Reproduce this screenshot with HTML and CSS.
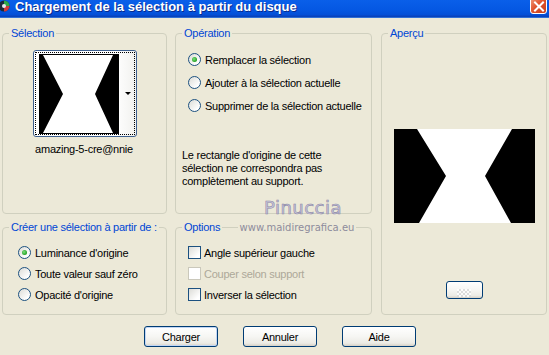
FILE: index.html
```html
<!DOCTYPE html>
<html>
  <head>
    <meta charset="utf-8">
    <title>Chargement de la sélection à partir du disque</title>
    <link rel="stylesheet" href="styles.css">
  </head>
  <body>
    <div class="titlebar">
      <svg class="app-icon" width="12" height="13" viewBox="0 0 12 13">
        <circle cx="5" cy="6" r="5.5" fill="#1a2a3a"/>
        <path d="M5 6 L5 0.5 A5.5 5.5 0 0 1 10.5 6 Z" fill="#2fa84a"/>
        <path d="M5 6 L10.5 6 A5.5 5.5 0 0 1 5 11.5 Z" fill="#d23a3a"/>
        <circle cx="5" cy="6" r="2" fill="#e8e8f0"/>
      </svg>
      <span class="title">Chargement de la sélection à partir du disque</span>
      <span class="close">
        <svg width="12" height="11" viewBox="0 0 12 11">
          <path d="M2 1.5 L10 9.5 M10 1.5 L2 9.5" stroke="#fff" stroke-width="2" stroke-linecap="square"/>
        </svg>
      </span>
    </div>

    <div class="dialog">
      <div class="groups">
        <fieldset class="group group-selection">
          <legend>Sélection</legend>
          <div class="thumb-combo">
            <div class="thumb-focus">
              <svg class="thumb" width="80" height="80" viewBox="0 0 80 80">
                <rect x="0" y="0" width="80" height="80" fill="#000"/>
                <polygon points="4,1 74,1 56,40 74,79 4,79 24,40" fill="#fff"/>
              </svg>
              <span class="arrow"></span>
            </div>
          </div>
          <div class="thumb-name">amazing-5-cre@nnie</div>
        </fieldset>

        <fieldset class="group group-operation">
          <legend>Opération</legend>
          <div class="option-list op-list">
            <label class="option"><span class="radio checked"></span>Remplacer la sélection</label>
            <label class="option"><span class="radio"></span>Ajouter à la sélection actuelle</label>
            <label class="option"><span class="radio"></span>Supprimer de la sélection actuelle</label>
          </div>
          <p class="note">Le rectangle d'origine de cette<br>sélection ne correspondra pas<br>complètement au support.</p>
        </fieldset>

        <fieldset class="group group-preview">
          <legend>Aperçu</legend>
          <svg class="preview" width="141" height="94" viewBox="0 0 141 94">
            <rect x="0" y="0" width="141" height="94" fill="#000"/>
            <polygon points="23,0 118,0 91,47 117,94 25,94 52,47" fill="#fff"/>
          </svg>
          <button class="btn mini-btn" type="button">
            <span class="checker"></span>
          </button>
        </fieldset>

        <fieldset class="group group-create">
          <legend>Créer une sélection à partir de :</legend>
          <div class="option-list small-list">
            <label class="option"><span class="radio checked"></span>Luminance d'origine</label>
            <label class="option"><span class="radio"></span>Toute valeur sauf zéro</label>
            <label class="option"><span class="radio"></span>Opacité d'origine</label>
          </div>
        </fieldset>

        <fieldset class="group group-options">
          <legend>Options</legend>
          <div class="option-list small-list check-list">
            <label class="option"><span class="check"></span>Angle supérieur gauche</label>
            <label class="option disabled"><span class="check"></span>Couper selon support</label>
            <label class="option"><span class="check"></span>Inverser la sélection</label>
          </div>
        </fieldset>

        <div class="watermark">
          <div class="wm-name">Pinuccia</div>
          <div class="wm-url">www.maidiregrafica.eu</div>
        </div>
      </div>

      <div class="buttons">
        <button class="btn default" type="button">Charger</button>
        <button class="btn" type="button">Annuler</button>
        <button class="btn" type="button">Aide</button>
      </div>
    </div>
  </body>
</html>
```

FILE: styles.css
```css
body {
  margin: 0;
  width: 549px;
  height: 355px;
  overflow: hidden;
  background: #ece9d8;
  font-family: "Liberation Sans", Arial, sans-serif;
  font-size: 11px;
  letter-spacing: -0.25px;
  color: #000;
}

/* barre de titre XP */
.titlebar {
  height: 17px;
  display: flex;
  align-items: flex-start;
  background: linear-gradient(#0a5fe9, #0558e3 55%, #0450d8 85%, #0a3fb5);
  border-bottom: 1px solid #2f6fd6;
  position: relative;
}

.app-icon {
  margin: 0 0 0 -1px;
}

.title {
  margin-left: 4px;
  color: #fff;
  font-weight: bold;
  font-size: 13px;
  line-height: 14px;
  letter-spacing: 0;
  text-shadow: 1px 1px 0 #0a2a8a;
  white-space: nowrap;
}

.close {
  position: absolute;
  right: 2px;
  top: -3px;
  width: 17px;
  height: 17px;
  box-sizing: border-box;
  border: 1px solid #fff;
  border-radius: 3px;
  background: linear-gradient(135deg, #f09b7c, #e0552e 45%, #c7401d);
  display: flex;
  align-items: center;
  justify-content: center;
  padding-top: 2px;
}

.dialog {
  padding: 8px 0 0 2px;
}

.groups {
  display: grid;
  grid-template-columns: 165px 197px 167px;
  grid-template-rows: 188px 95px;
  column-gap: 8px;
  row-gap: 6px;
  position: relative;
}

.group {
  margin: 0;
  padding: 0;
  min-width: 0;
  border: 1px solid #d0d0bf;
  border-radius: 4px;
  box-sizing: border-box;
}

.group legend {
  margin-left: 6px;
  padding: 0 2px;
  color: #0046d5;
  line-height: 14px;
  white-space: nowrap;
}

.group-selection {
  grid-column: 1;
  grid-row: 1;
  display: flex;
  flex-direction: column;
  align-items: center;
}

.group-operation {
  grid-column: 2;
  grid-row: 1;
}

.group-preview {
  grid-column: 3;
  grid-row: 1 / span 2;
  margin-left: 1px;
  display: flex;
  flex-direction: column;
  align-items: center;
}

.group-create {
  grid-column: 1;
  grid-row: 2;
}

.group-options {
  grid-column: 2;
  grid-row: 2;
}

/* vignette avec liste déroulante */
.thumb-combo {
  margin-top: 10px;
  width: 104px;
  height: 87px;
  box-sizing: border-box;
  border: 1px solid #3d5f8e;
  border-radius: 3px;
  background: linear-gradient(90deg, #fff 80%, #f1f1ee);
  padding: 1px;
}

.thumb-focus {
  height: 100%;
  box-sizing: border-box;
  border: 1px dotted #000;
  display: flex;
  align-items: center;
  padding-left: 3px;
}

.thumb {
  display: block;
}

.arrow {
  margin-left: 6px;
  width: 0;
  height: 0;
  border-left: 3px solid transparent;
  border-right: 3px solid transparent;
  border-top: 3px solid #000;
}

.thumb-name {
  margin-top: 6px;
  margin-left: -1px;
  line-height: 13px;
}

/* boutons radio et cases */
.option-list {
  display: flex;
  flex-direction: column;
}

.op-list {
  padding: 8px 0 0 12px;
}

.op-list .option {
  height: 23px;
}

.small-list {
  padding: 8px 0 0 15px;
}

.check-list {
  padding-left: 12px;
}

.small-list .option {
  height: 21px;
}

.option {
  display: flex;
  align-items: center;
  white-space: nowrap;
}

.radio {
  width: 13px;
  height: 13px;
  box-sizing: border-box;
  border: 1px solid #1c5180;
  border-radius: 50%;
  background: linear-gradient(135deg, #dcdcd7, #fff 80%);
  margin-right: 4px;
  display: flex;
  align-items: center;
  justify-content: center;
}

.radio.checked::after {
  content: "";
  width: 5px;
  height: 5px;
  border-radius: 50%;
  background: radial-gradient(circle at 40% 40%, #7fe07f, #21a121 70%);
}

.check {
  width: 13px;
  height: 13px;
  box-sizing: border-box;
  border: 1px solid #1c5180;
  background: linear-gradient(135deg, #dcdcd7, #fff 80%);
  margin-right: 3px;
}

.option.disabled {
  color: #aca899;
}

.option.disabled .check {
  border-color: #cac8bb;
  background: #fff;
}

.note {
  margin: 32px 0 0 6px;
  line-height: 13px;
}

/* aperçu */
.preview {
  display: block;
  margin-top: 89px;
}

/* filigrane */
.watermark {
  position: absolute;
  left: 234px;
  top: 172px;
  width: 122px;
  text-align: center;
  pointer-events: none;
  letter-spacing: 0;
}

.wm-name {
  margin-left: 12px;
  font-family: "DejaVu Sans", sans-serif;
  font-size: 18px;
  line-height: 20px;
  letter-spacing: 0.5px;
  color: #c9c6dc;
  -webkit-text-stroke: 0.6px #8e8aa8;
}

.wm-url {
  margin-top: 4px;
  font-family: "DejaVu Sans", sans-serif;
  font-size: 10px;
  line-height: 11px;
  color: #8e8c9c;
  background: #ece9d8;
  padding: 0 2px;
  display: inline-block;
}

/* boutons */
.buttons {
  display: flex;
  gap: 25px;
  padding: 11px 0 0 142px;
}

.btn {
  width: 74px;
  height: 21px;
  box-sizing: border-box;
  border: 1px solid #003c74;
  border-radius: 3px;
  background: linear-gradient(#ffffff, #f6f6f3 50%, #ecebe5 85%, #d6d0c5);
  font-family: "Liberation Sans", Arial, sans-serif;
  font-size: 11px;
  letter-spacing: -0.25px;
  color: #000;
  padding: 0;
}

.btn.default {
  box-shadow: inset 0 0 0 1px #c2d6f4;
}

.btn.mini-btn {
  margin-top: 58px;
  width: 37px;
  height: 18px;
  display: flex;
  align-items: center;
  justify-content: center;
}

.checker {
  width: 14px;
  height: 8px;
  margin-top: 6px;
  background: conic-gradient(#d8d8d8 25%, #fff 0 50%, #d8d8d8 0 75%, #fff 0) 0 0 / 4px 4px;
  opacity: 0.8;
}
```
